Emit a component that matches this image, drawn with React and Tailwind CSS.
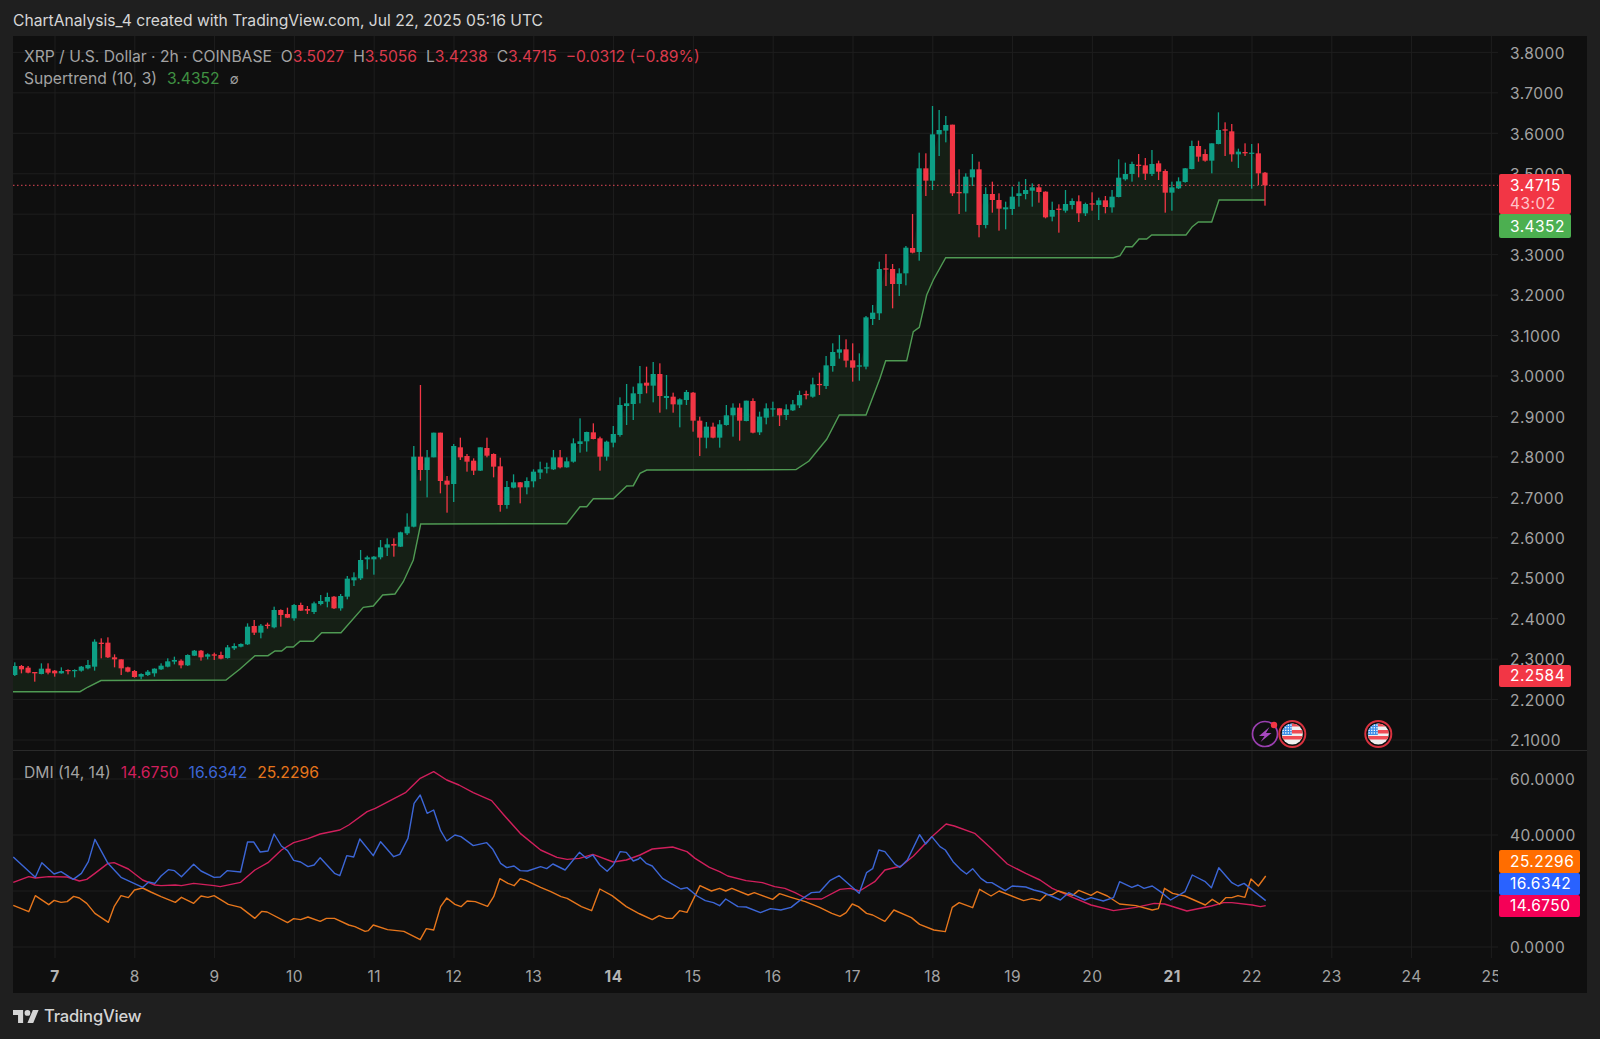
import React from 'react'

const UP = '#0d9f85'
const DOWN = '#f23645'
const G = 1
const R = 0

// candles traced off the chart: [dir, bodyTop, bodyBottom, high, low], y = origin + v / 3
const seg = (oy, rows) => rows.map(([up, t, b, h, l]) => ({ up, t: oy + t / 3, b: oy + b / 3, h: oy + h / 3, l: oy + l / 3 }))

const candles = [
  ...seg(620, [
    [G,138,165,127,168],[R,138,148,135,160],[R,143,158,138,160],[R,156,160,156,185],[G,146,162,130,163],
    [R,146,158,130,163],[R,152,160,150,170],[G,153,160,142,161],[R,150,153,148,163],[G,150,152,148,172],
    [G,140,152,138,155],[G,135,145,120,148],[G,65,140,58,152],[R,68,72,55,115],[R,68,112,52,114],
    [R,112,118,103,142],[R,118,145,118,165],[R,142,155,140,157],[R,153,171,150,173],[G,162,170,160,178],
    [G,155,165,150,168],[G,146,160,145,170],[G,137,148,130,150],[G,124,140,115,142],[G,120,125,110,133],
    [R,122,136,118,145],[G,105,136,103,138],[G,92,107,90,108],[R,92,112,90,122],[G,103,110,100,118],
    [R,103,107,98,120],[R,105,116,95,118],[G,82,114,75,116],[G,78,85,70,90],[G,72,80,70,82],
    [G,20,73,10,75],[R,18,38,0,45],[G,17,38,12,55],[R,14,18,8,26],
  ]),
  ...seg(500, [
    [G,330,382,320,385],[R,330,345,328,380],[R,342,353,323,354],[G,315,355,312,362],[R,315,332,308,333],
    [R,327,332,318,342],[G,310,336,305,342],[G,303,312,285,316],[G,291,305,278,322],[R,290,325,288,327],
    [G,288,325,282,332],[G,236,290,228,298],[G,232,241,217,258],[G,180,235,150,240],[G,172,178,167,208],
    [G,170,178,168,224],[G,142,172,120,178],[G,133,143,115,168],[R,132,137,115,170],[G,97,140,95,141],
    [G,80,100,40,105],
  ]),
  ...seg(370, [
    [G,260,470,228,472],[R,260,300,45,332],[G,262,300,240,382],[G,188,262,188,262],[R,188,333,188,370],
    [R,332,344,318,428],[G,228,342,222,396],[R,232,262,203,270],[R,258,275,252,305],[R,272,302,265,315],
    [G,232,302,232,303],[R,234,257,203,262],[R,252,290,250,322],[R,289,405,263,425],[G,351,405,333,416],
    [G,337,353,313,355],[R,337,352,336,400],[G,333,352,322,373],[G,305,334,298,352],[G,298,308,275,327],
    [G,292,295,278,310],[G,262,298,240,300],[R,262,292,240,295],[G,274,292,262,293],[G,220,275,205,278],
    [G,214,222,145,248],[G,186,214,185,245],[R,187,207,160,208],[R,205,260,200,302],[G,215,260,212,272],
    [G,192,218,168,232],[G,105,195,82,200],[G,100,108,42,165],[G,70,102,50,150],[G,40,72,-12,100],
    [R,38,47,-10,70],[G,12,47,-24,97],[R,12,78,-20,128],[G,78,84,15,118],[R,80,103,68,128],
    [G,88,104,85,172],[G,66,90,60,105],[R,68,152,66,185],[R,152,203,140,258],[G,170,203,156,235],
    [R,170,203,158,205],[G,163,203,150,233],[G,136,165,105,167],[G,113,136,100,200],[R,113,152,100,212],
    [G,92,153,92,154],[R,93,188,85,190],[G,140,187,125,195],[G,115,143,100,163],
  ]),
  ...seg(220, [
    [G,565,568,545,590],[R,565,586,565,618],[G,568,585,553,600],[G,553,571,540,573],[G,525,556,512,564],
    [R,522,526,512,538],[G,493,530,473,533],[R,492,495,458,525],[G,436,498,408,507],[G,396,438,370,455],
    [G,388,398,345,416],[R,388,422,358,442],[R,421,443,370,485],[G,436,440,400,482],[G,292,440,288,448],
    [G,278,297,255,315],[G,147,280,125,300],[R,145,149,102,198],[R,147,192,132,265],[G,160,192,145,228],
    [G,83,160,78,196],
  ]),
  ...seg(90, [
    [R,474,488,372,490],[G,235,486,188,512],[R,235,272,190,318],[G,133,272,48,300],[G,120,133,60,198],
    [G,105,122,78,157],[R,104,310,104,318],[R,306,310,238,372],[G,260,310,250,365],[G,238,262,192,288],
    [R,238,405,215,442],[G,312,405,292,415],[R,312,330,275,368],[R,330,356,310,422],[G,352,358,335,418],
    [G,320,357,290,375],[G,310,318,275,350],[G,300,312,267,328],[G,292,302,280,350],[R,292,306,282,338],
    [R,305,382,304,385],[G,360,380,335,394],[R,356,359,343,428],[G,342,362,300,368],[G,333,345,325,358],
    [R,334,370,316,396],[G,342,370,338,378],[R,340,343,307,362],[G,331,345,323,390],[R,331,351,318,370],
    [G,320,352,300,368],[G,263,321,208,322],[G,252,268,218,272],[G,222,252,215,275],[R,224,228,192,262],
    [R,226,251,204,270],[G,222,252,180,258],[R,220,245,212,270],[R,243,308,238,368],[G,292,308,275,362],
    [G,274,295,262,297],[G,235,276,234,278],[G,168,237,152,238],[R,168,200,152,215],[R,192,212,178,215],
    [G,160,212,160,250],[G,120,162,67,163],[R,118,122,97,198],[R,124,193,102,215],[G,185,193,176,234],
    [R,186,190,160,198],[G,188,190,162,296],[R,190,250,160,285],[R,248,286,246,347],
  ]),
]

const cx = (i) => 14.8 + i * 6.65

const supertrend = [
  [13,691.7],[80,691.7],[88,687],[101,680.5],[226,680],[240,669],[255,655.7],[268,655.7],[275,651],[281.7,651],
  [286.7,647],[293.3,647],[300,641.3],[313.3,641.3],[321.7,632.7],[341,632.7],[363.3,607.3],[373.3,606],
  [382.7,595],[395,594],[403.3,581.7],[413.3,560],[420.7,524],[566.7,523.7],[580,506.7],[586.7,506.7],
  [593.3,498.7],[613.3,498.7],[626.7,486],[633.3,485.7],[640,473.3],[646.7,470],[796,469.6],[809,461],
  [826.7,439.3],[839.3,415],[866,415],[880,378.3],[885.7,360.7],[906.7,360.7],[913.3,331.7],[919.3,327.3],
  [926.7,295],[933.3,280],[945.7,257.7],[1113.3,257.7],[1120,255.7],[1125.7,246.7],[1132.3,246.7],[1139,239],
  [1146.7,239],[1151.7,235],[1186,235],[1192.3,226.7],[1198.3,222],[1211.7,222],[1219,200],[1265,200],
]

const toPts = (arr) => arr.map(([x, y]) => `${x},${y}`).join(' ')

const fillPts = toPts([
  [13, (candles[0].t + candles[0].b) / 2],
  ...candles.map((c, i) => [cx(i), (c.t + c.b) / 2]),
  ...[...supertrend].reverse(),
])

// DMI lines traced in two passes, left half and right half
const left = (pts) => pts.map(([x, y]) => [10 + x / 2.45, 760 + y / 3])
const right = (pts) => pts.map(([x, y]) => [640 + x / 2.45, 790 + y / 3])

const dmiPlus = [
  ...left([[8,367],[46,350],[62,354],[95,350],[140,351],[170,363],[188,358],[208,340],[240,310],[255,308],[290,327],[325,360],[355,375],[370,377],[405,375],[420,377],[450,370],[500,377],[515,380],[565,367],[600,330],[632,308],[665,270],[695,248],[730,236],[760,222],[808,210],[830,195],[875,155],[895,145],[970,97],[1005,55],[1038,35],[1070,60],[1100,75],[1135,98],[1180,122],[1210,165],[1250,220],[1300,270],[1340,292],[1365,298],[1395,295],[1428,283],[1478,306],[1510,300]]),
  ...right([[0,195],[30,177],[80,171],[115,185],[135,205],[170,232],[195,245],[215,258],[260,272],[300,278],[330,290],[355,295],[380,308],[410,327],[445,327],[490,298],[515,295],[538,303],[575,275],[600,240],[640,228],[670,198],[715,140],[750,102],[770,108],[820,130],[860,175],[900,222],[945,250],[980,270],[1010,295],[1060,322],[1105,345],[1160,362],[1215,352],[1260,340],[1285,342],[1340,363],[1400,348],[1430,338],[1450,338],[1500,345],[1520,350],[1533,347]]),
]

const dmiMinus = [
  ...left([[8,291],[62,352],[78,308],[108,342],[125,335],[155,358],[175,340],[192,305],[208,238],[240,310],[272,352],[325,382],[340,366],[355,370],[370,348],[388,329],[403,332],[420,350],[450,313],[468,333],[500,352],[515,351],[532,332],[565,336],[582,246],[597,246],[613,276],[632,273],[647,222],[665,258],[680,272],[695,301],[712,306],[730,320],[745,315],[760,293],[795,340],[808,347],[825,287],[842,291],[857,237],[890,287],[908,245],[940,290],[955,283],[975,235],[990,130],[1005,105],[1022,160],[1038,150],[1055,212],[1070,243],[1090,225],[1105,230],[1135,257],[1168,248],[1183,268],[1202,310],[1217,323],[1235,318],[1250,332],[1268,333],[1300,320],[1315,326],[1330,312],[1360,330],[1395,277],[1412,295],[1428,285],[1445,315],[1463,334],[1478,315],[1495,275],[1510,277],[1527,303],[1540,297]]),
  ...right([[0,202],[15,220],[30,228],[55,265],[80,283],[100,297],[115,293],[140,318],[160,332],[180,338],[195,347],[210,327],[240,350],[260,351],[295,368],[320,356],[345,360],[370,352],[395,328],[420,308],[440,306],[465,272],[488,257],[537,310],[555,248],[570,236],[585,180],[600,185],[625,223],[637,232],[655,210],[685,134],[700,162],[715,140],[735,170],[748,180],[767,215],[785,238],[800,252],[815,236],[835,265],[850,278],[862,278],[895,302],[912,288],[945,291],[965,300],[985,306],[1030,330],[1050,308],[1090,330],[1105,323],[1135,333],[1160,323],[1175,275],[1205,292],[1220,285],[1235,295],[1255,288],[1275,305],[1300,330],[1335,305],[1353,255],[1385,275],[1400,293],[1418,233],[1450,278],[1465,288],[1480,280],[1533,332]]),
]

const adx = [
  ...left([[8,436],[46,455],[62,407],[95,434],[108,421],[125,427],[140,425],[156,409],[170,414],[188,430],[208,460],[241,487],[255,440],[272,407],[290,413],[305,390],[325,384],[345,396],[370,410],[405,427],[420,412],[450,430],[468,408],[485,412],[500,407],[515,418],[535,433],[565,442],[600,475],[617,454],[630,456],[680,488],[695,476],[712,479],[730,471],[760,484],[775,475],[795,475],[830,495],[845,500],[870,514],[878,512],[890,495],[925,509],[965,514],[1005,539],[1020,506],[1038,510],[1055,440],[1070,414],[1090,433],[1105,440],[1120,423],[1140,425],[1170,439],[1185,410],[1200,356],[1220,370],[1235,377],[1250,356],[1265,362],[1300,382],[1325,395],[1350,410],[1365,415],[1400,440],[1425,452],[1445,387],[1475,407],[1510,440],[1540,460]]),
  ...right([[0,372],[30,389],[47,377],[65,385],[80,385],[97,362],[115,367],[147,287],[175,303],[195,295],[210,303],[225,295],[265,315],[280,308],[325,328],[342,311],[370,322],[405,335],[440,352],[470,370],[490,379],[505,368],[520,342],[535,350],[555,370],[570,375],[600,394],[622,360],[665,383],[685,403],[720,420],[748,425],[765,352],[782,338],[815,353],[832,298],[860,318],[880,303],[940,332],[960,326],[980,332],[995,314],[1010,314],[1025,303],[1060,316],[1075,301],[1105,316],[1120,305],[1145,318],[1175,342],[1215,347],[1255,360],[1270,356],[1285,295],[1305,310],[1335,318],[1385,345],[1402,328],[1420,342],[1435,323],[1450,323],[1465,317],[1482,322],[1497,267],[1515,288],[1533,258]]),
]

const dates = [7, 8, 9, 10, 11, 12, 13, 14, 15, 16, 17, 18, 19, 20, 21, 22, 23, 24, 25]
const dateX = (d) => 55 + (d - 7) * 79.8
const bold = [7, 14, 21]
const priceLabels = ['3.8000', '3.7000', '3.6000', '3.5000', '3.4000', '3.3000', '3.2000', '3.1000', '3.0000', '2.9000', '2.8000', '2.7000', '2.6000', '2.5000', '2.4000', '2.3000', '2.2000', '2.1000']
const priceY = (i) => 52.4 + i * 40.45

function VGrid({ y1, y2 }) {
  return dates.map((d) => <line key={d} x1={dateX(d)} x2={dateX(d)} y1={y1} y2={y2} stroke="#1e1e1e" strokeWidth="1" />)
}

function UsFlag({ x, y }) {
  const id = `flag-${x}`
  const dots = []
  for (let r = 0; r < 4; r++) for (let c = 0; c < 4; c++) dots.push(<rect key={`${r}-${c}`} x={x - 9.8 + c * 2.6} y={y - 9.5 + r * 2.6} width="1.3" height="1.3" fill="#fff" />)
  return (
    <g>
      <circle cx={x} cy={y} r="13" fill="#0f0f0f" stroke="#d8323f" strokeWidth="2" />
      <clipPath id={id}><circle cx={x} cy={y} r="10.5" /></clipPath>
      <g clipPath={`url(#${id})`}>
        <rect x={x - 11} y={y - 11} width="22" height="22" fill="#f0f0f0" />
        <rect x={x - 1} y={y - 11} width="12" height="3.5" fill="#ee4c55" />
        <rect x={x - 1} y={y - 4} width="12" height="3.5" fill="#ee4c55" />
        <rect x={x - 11} y={y + 2} width="22" height="3.5" fill="#ee4c55" />
        <rect x={x - 11} y={y - 11} width="10.5" height="12" fill="#3b8ee8" />
        {dots}
      </g>
    </g>
  )
}

function MainChart() {
  return (
    <svg className="block w-full h-full" viewBox="13 36 1485 714" preserveAspectRatio="none">
      {priceLabels.map((p, i) => <line key={p} x1="13" x2="1498" y1={priceY(i)} y2={priceY(i)} stroke="#1e1e1e" strokeWidth="1" />)}
      <VGrid y1="36" y2="750" />
      <polygon points={fillPts} fill="#4caf50" fillOpacity="0.1" />
      <polyline points={toPts(supertrend)} fill="none" stroke="#4f9a53" strokeWidth="1.4" />
      {candles.map((c, i) => (
        <g key={i} fill={c.up ? UP : DOWN}>
          <rect x={cx(i) - 0.65} y={c.h} width="1.3" height={c.l - c.h} />
          <rect x={cx(i) - 2.6} y={c.t} width="5.2" height={Math.max(c.b - c.t, 1.2)} />
        </g>
      ))}
      <line x1="13" x2="1498" y1="185.3" y2="185.3" stroke="#e04656" strokeWidth="1" strokeDasharray="1.5 2.5" />

      <circle cx="1265" cy="734" r="12.5" fill="#0f0f0f" stroke="#9a3fb0" strokeWidth="1.7" />
      <path d="M1269.5 727 L1259 736 L1264.5 736 L1260.5 742 L1271.5 733 L1266 733 Z" fill="#a647bf" />
      <circle cx="1274" cy="725" r="3.2" fill="#f23645" />
      <UsFlag x={1292.3} y={734} />
      <UsFlag x={1378.3} y={734} />
    </svg>
  )
}

function DmiChart() {
  return (
    <svg className="block w-full h-full" viewBox="13 751 1485 207" preserveAspectRatio="none">
      {[779, 835, 891, 947].map((y) => <line key={y} x1="13" x2="1498" y1={y} y2={y} stroke="#1e1e1e" strokeWidth="1" />)}
      <VGrid y1="751" y2="958" />
      <polyline points={toPts(dmiPlus)} fill="none" stroke="#d01f5c" strokeWidth="1.4" strokeLinejoin="round" />
      <polyline points={toPts(adx)} fill="none" stroke="#e6761c" strokeWidth="1.4" strokeLinejoin="round" />
      <polyline points={toPts(dmiMinus)} fill="none" stroke="#3c66d6" strokeWidth="1.4" strokeLinejoin="round" />
    </svg>
  )
}

function PriceTag({ top, h, w = 'w-[72px]', bg, children }) {
  return (
    <div className={`absolute left-[1px] ${w} ${h} ${top} ${bg} rounded-[2px] pl-[11px] pt-[1px] text-white text-[15.5px] leading-none flex flex-col justify-center tracking-[0.45px]`}>
      {children}
    </div>
  )
}

export default function App() {
  return (
    <div className="w-[1600px] h-[1039px] bg-[#1f1f1f] overflow-hidden flex flex-col [font-family:Inter,sans-serif]">
      <div className="h-[36px] pl-[13px] pt-[6px] flex items-center text-[15.65px] text-[#d6d6d6]">
        ChartAnalysis_4 created with TradingView.com, Jul 22, 2025 05:16 UTC
      </div>

      <div className="ml-[13px] w-[1574px] h-[957px] bg-[#0f0f0f] flex flex-col">
        {/* price pane */}
        <div className="h-[714px] flex">
          <div className="relative w-[1485px] h-full">
            <MainChart />
            <div className="absolute left-[11px] top-[10px] text-[15.65px] text-[#a3a3a3] leading-[22px]">
              <div className="flex">
                <span>XRP / U.S. Dollar · 2h · COINBASE</span>
                <span className="ml-[9px]">O<span className="text-[#d93a4c]">3.5027</span></span>
                <span className="ml-[9px]">H<span className="text-[#d93a4c]">3.5056</span></span>
                <span className="ml-[9px]">L<span className="text-[#d93a4c]">3.4238</span></span>
                <span className="ml-[9px]">C<span className="text-[#d93a4c]">3.4715</span></span>
                <span className="ml-[9px] text-[#d93a4c]">−0.0312 (−0.89%)</span>
              </div>
              <div className="flex">
                <span>Supertrend (10, 3)</span>
                <span className="ml-[10px] text-[#3f9142]">3.4352</span>
                <span className="ml-[10px] text-[13px]">∅</span>
              </div>
            </div>
          </div>
          <div className="relative w-[89px] h-full overflow-hidden text-[15.5px] tracking-[0.45px] text-[#a3a3a3]">
            <div className="-mt-[2.8px] pl-[12px] flex flex-col">
              {priceLabels.map((p) => <div key={p} className="h-[40.45px] flex items-center">{p}</div>)}
            </div>
            <PriceTag top="top-[138px]" h="h-[40px]" bg="bg-[#f23645]">
              <span>3.4715</span>
              <span className="mt-[3px] text-[#ffc4ca]">43:02</span>
            </PriceTag>
            <PriceTag top="top-[178px]" h="h-[23.5px]" bg="bg-[#4caf50]">3.4352</PriceTag>
            <PriceTag top="top-[628.5px]" h="h-[22px]" bg="bg-[#f23645]">2.2584</PriceTag>
          </div>
        </div>

        {/* DMI pane */}
        <div className="h-[208px] flex border-t border-[#2a2a2a]">
          <div className="relative w-[1485px] h-full">
            <DmiChart />
            <div className="absolute left-[11px] top-[11px] flex text-[15.65px] leading-[22px] text-[#a3a3a3]">
              <span>DMI (14, 14)</span>
              <span className="ml-[10px] text-[#d01f5c]">14.6750</span>
              <span className="ml-[10px] text-[#3c66d6]">16.6342</span>
              <span className="ml-[10px] text-[#e6761c]">25.2296</span>
            </div>
          </div>
          <div className="relative w-[89px] h-full overflow-hidden text-[15.5px] tracking-[0.45px] text-[#a3a3a3]">
            <div className="pt-[1px] pl-[12px] flex flex-col">
              {['60.0000', '40.0000', '20.0000', '0.0000'].map((p) => <div key={p} className="h-[56px] flex items-center">{p}</div>)}
            </div>
            <PriceTag top="top-[99px]" h="h-[22.5px]" w="w-[81px]" bg="bg-[#ff6d00]">25.2296</PriceTag>
            <PriceTag top="top-[121.5px]" h="h-[22px]" w="w-[81px]" bg="bg-[#2962ff]">16.6342</PriceTag>
            <PriceTag top="top-[143.5px]" h="h-[22px]" w="w-[81px]" bg="bg-[#f50057]">14.6750</PriceTag>
          </div>
        </div>

        {/* time axis */}
        <div className="h-[35px] w-[1485px] overflow-hidden pl-[2.1px] pt-[3px] flex items-center text-[15.5px] tracking-[0.45px] text-[#a3a3a3]">
          {dates.map((d) => (
            <div key={d} className={bold.includes(d) ? 'w-[79.8px] shrink-0 text-center font-bold text-[#b4b4b4]' : 'w-[79.8px] shrink-0 text-center'}>{d}</div>
          ))}
        </div>
      </div>

      <div className="flex-1 pl-[13px] flex items-center gap-[5px] text-[#d4d4d4]">
        <svg width="26" height="13" viewBox="0 4 36 18" fill="currentColor">
          <path d="M14 22H7V11H0V4h14v18zM28 22h-8l7.5-18h8L28 22z" />
          <circle cx="20" cy="8" r="4" />
        </svg>
        <span className="text-[16.6px] font-medium tracking-[-0.2px]">TradingView</span>
      </div>
    </div>
  )
}
